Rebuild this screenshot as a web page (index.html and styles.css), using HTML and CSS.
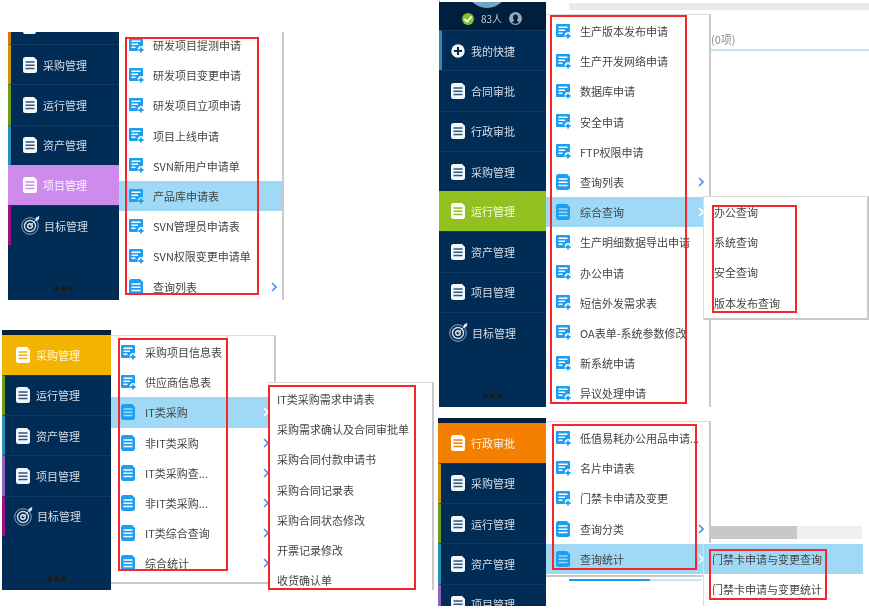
FILE: index.html
```html
<!DOCTYPE html>
<html lang="zh-CN">
<head>
<meta charset="utf-8">
<title>菜单截图</title>
<link rel="stylesheet" href="styles.css">
</head>
<body>
<svg class="defs" width="0" height="0" aria-hidden="true">
  <symbol id="i-form" viewBox="0 0 15 15">
    <path d="M1 0H13a1 1 0 0 1 1 1V8.500a3.500 3.500 0 0 0-5 4.500H1a1 1 0 0 1-1-1V1a1 1 0 0 1 1-1z" fill="#1c9ff2"/>
    <path d="M2.500 3.300h9M2.500 6.300h6.500M2.500 9.300h4" stroke="#fff" stroke-width="1.500" fill="none"/>
    <path d="M12 9.500v5M9.500 12h5" stroke="#1c9ff2" stroke-width="1.800" fill="none"/>
  </symbol>
  <symbol id="i-doc" viewBox="0 0 14 16">
    <path d="M2.500 0H11l3 3v10.500a2.500 2.500 0 0 1-2.500 2.500h-9A2.500 2.500 0 0 1 0 13.500v-11A2.500 2.500 0 0 1 2.500 0z" fill="#1c9ff2"/>
    <path d="M2.500 5h9M2.500 8.300h9M2.500 11.600h9" stroke="currentColor" stroke-width="1.500" fill="none"/>
  </symbol>
  <symbol id="i-side" viewBox="0 0 14 16">
    <path d="M2.500 0H11l3 3v10.500a2.500 2.500 0 0 1-2.500 2.500h-9A2.500 2.500 0 0 1 0 13.500v-11A2.500 2.500 0 0 1 2.500 0z" fill="#f4f6f8"/>
    <path d="M2.500 5h9M2.500 8.300h9M2.500 11.600h9" stroke="#33557f" stroke-width="1.500" fill="none"/>
  </symbol>
  <symbol id="i-side-on" viewBox="0 0 14 16">
    <path d="M2.500 0H11l3 3v10.500a2.500 2.500 0 0 1-2.500 2.500h-9A2.500 2.500 0 0 1 0 13.500v-11A2.500 2.500 0 0 1 2.500 0z" fill="#fff"/>
    <path d="M2.500 5h9M2.500 8.300h9M2.500 11.600h9" stroke="currentColor" stroke-width="1.500" fill="none"/>
  </symbol>
  <symbol id="i-target" viewBox="0 0 19 19">
    <circle cx="9" cy="10" r="8.300" fill="none" stroke="#b9c4d0" stroke-width=".8"/>
    <circle cx="9" cy="10" r="5.500" fill="none" stroke="#d5dce4" stroke-width="1.400"/>
    <circle cx="9" cy="10" r="2.300" fill="none" stroke="#e8edf2" stroke-width="1.400"/>
    <path d="M9 10l7-7M15 2l3-1.500-.8 3L15 4.500z" stroke="#e8edf2" stroke-width=".8" fill="#e8edf2"/>
  </symbol>
  <symbol id="i-plus" viewBox="0 0 15 15">
    <circle cx="7.500" cy="7.500" r="7.200" fill="#f4f6f8"/>
    <path d="M7.500 3.200v8.600M3.200 7.500h8.600" stroke="#012c56" stroke-width="2.200"/>
  </symbol>
  <symbol id="i-chev" viewBox="0 0 6 10">
    <path d="M1 1l4 4-4 4" fill="none" stroke="currentColor" stroke-width="1.600"/>
  </symbol>
</svg>

<main class="canvas">

  <!-- bottom layer: fragments of the page behind the top-right menu -->
  <div class="page-strip"></div>
  <div class="page-count">(0项)</div>
  <div class="page-rule"></div>
  <div class="page-edge"></div>

  <!-- panel A: 项目管理 -->
  <section class="panel panel-a">
    <nav class="side">
      <div class="sliver bar-orange"><span class="stub"></span></div>
      <a class="nav bar-yellow"><svg class="nav-ic"><use href="#i-side"/></svg>采购管理</a>
      <a class="nav bar-green"><svg class="nav-ic"><use href="#i-side"/></svg>运行管理</a>
      <a class="nav bar-teal"><svg class="nav-ic"><use href="#i-side"/></svg>资产管理</a>
      <a class="nav on-purple"><svg class="nav-ic"><use href="#i-side-on"/></svg>项目管理</a>
      <a class="nav bar-magenta"><svg class="nav-tg"><use href="#i-target"/></svg>目标管理</a>
      <div class="dots"><i></i><i></i><i></i></div>
    </nav>
    <div class="menu menu-a">
      <a class="row row-cut"><svg class="ic"><use href="#i-form"/></svg>研发项目提测申请</a>
      <a class="row"><svg class="ic"><use href="#i-form"/></svg>研发项目变更申请</a>
      <a class="row"><svg class="ic"><use href="#i-form"/></svg>研发项目立项申请</a>
      <a class="row"><svg class="ic"><use href="#i-form"/></svg>项目上线申请</a>
      <a class="row"><svg class="ic"><use href="#i-form"/></svg>SVN新用户申请单</a>
      <a class="row hl"><svg class="ic"><use href="#i-form"/></svg>产品库申请表</a>
      <a class="row"><svg class="ic"><use href="#i-form"/></svg>SVN管理员申请表</a>
      <a class="row"><svg class="ic"><use href="#i-form"/></svg>SVN权限变更申请单</a>
      <a class="row"><svg class="ic ic-doc"><use href="#i-doc"/></svg>查询列表<svg class="chev"><use href="#i-chev"/></svg></a>
    </div>
    <div class="redbox rb-a"></div>
  </section>

  <!-- panel C: 运行管理 -->
  <section class="panel panel-c">
    <nav class="side">
      <div class="status">
        <span class="arc"></span>
        <span class="ok"><svg viewBox="0 0 10 10"><path d="M2 5l2.200 2.200L8 3" fill="none" stroke="#fff" stroke-width="1.500"/></svg></span>
        <span class="online">83人</span>
        <svg class="user" viewBox="0 0 12 12"><circle cx="6" cy="6" r="6" fill="#9aa7b4"/><path d="M6 2.200a2.300 2.800 0 0 1 2.300 2.800c0 1.500-1 2.300-1 3l2 1.400a5 5 0 0 1-6.600 0l2-1.400c0-.7-1-1.500-1-3A2.300 2.800 0 0 1 6 2.200z" fill="#001f3f"/></svg>
      </div>
      <a class="nav bar-blue"><svg class="nav-pl"><use href="#i-plus"/></svg>我的快捷</a>
      <a class="nav"><svg class="nav-ic"><use href="#i-side"/></svg>合同审批</a>
      <a class="nav"><svg class="nav-ic"><use href="#i-side"/></svg>行政审批</a>
      <a class="nav"><svg class="nav-ic"><use href="#i-side"/></svg>采购管理</a>
      <a class="nav on-green"><svg class="nav-ic"><use href="#i-side-on"/></svg>运行管理</a>
      <a class="nav"><svg class="nav-ic"><use href="#i-side"/></svg>资产管理</a>
      <a class="nav"><svg class="nav-ic"><use href="#i-side"/></svg>项目管理</a>
      <a class="nav"><svg class="nav-tg"><use href="#i-target"/></svg>目标管理</a>
      <div class="dots"><i></i><i></i><i></i></div>
    </nav>
    <div class="menu menu-c">
      <a class="row"><svg class="ic"><use href="#i-form"/></svg>生产版本发布申请</a>
      <a class="row"><svg class="ic"><use href="#i-form"/></svg>生产开发网络申请</a>
      <a class="row"><svg class="ic"><use href="#i-form"/></svg>数据库申请</a>
      <a class="row"><svg class="ic"><use href="#i-form"/></svg>安全申请</a>
      <a class="row"><svg class="ic"><use href="#i-form"/></svg>FTP权限申请</a>
      <a class="row"><svg class="ic ic-doc"><use href="#i-doc"/></svg>查询列表<svg class="chev"><use href="#i-chev"/></svg></a>
      <a class="row hl"><svg class="ic ic-doc"><use href="#i-doc"/></svg>综合查询<svg class="chev"><use href="#i-chev"/></svg></a>
      <a class="row"><svg class="ic"><use href="#i-form"/></svg>生产明细数据导出申请</a>
      <a class="row"><svg class="ic"><use href="#i-form"/></svg>办公申请</a>
      <a class="row"><svg class="ic"><use href="#i-form"/></svg>短信外发需求表</a>
      <a class="row"><svg class="ic"><use href="#i-form"/></svg>OA表单-系统参数修改</a>
      <a class="row"><svg class="ic"><use href="#i-form"/></svg>新系统申请</a>
      <a class="row"><svg class="ic"><use href="#i-form"/></svg>异议处理申请</a>
    </div>
    <div class="sub sub-c">
      <a class="subrow">办公查询</a>
      <a class="subrow">系统查询</a>
      <a class="subrow">安全查询</a>
      <a class="subrow">版本发布查询</a>
    </div>
    <div class="redbox rb-c1"></div>
    <div class="redbox rb-c2"></div>
  </section>

  <!-- panel B: 采购管理 -->
  <section class="panel panel-b">
    <nav class="side">
      <div class="thin"></div>
      <a class="nav on-yellow"><svg class="nav-ic"><use href="#i-side-on"/></svg>采购管理</a>
      <a class="nav bar-green"><svg class="nav-ic"><use href="#i-side"/></svg>运行管理</a>
      <a class="nav bar-teal"><svg class="nav-ic"><use href="#i-side"/></svg>资产管理</a>
      <a class="nav bar-purple"><svg class="nav-ic"><use href="#i-side"/></svg>项目管理</a>
      <a class="nav bar-magenta"><svg class="nav-tg"><use href="#i-target"/></svg>目标管理</a>
      <div class="dots"><i></i><i></i><i></i></div>
    </nav>
    <div class="menu menu-b">
      <a class="row"><svg class="ic"><use href="#i-form"/></svg>采购项目信息表</a>
      <a class="row"><svg class="ic"><use href="#i-form"/></svg>供应商信息表</a>
      <a class="row hl"><svg class="ic ic-doc"><use href="#i-doc"/></svg>IT类采购<svg class="chev"><use href="#i-chev"/></svg></a>
      <a class="row"><svg class="ic ic-doc"><use href="#i-doc"/></svg>非IT类采购<svg class="chev"><use href="#i-chev"/></svg></a>
      <a class="row"><svg class="ic ic-doc"><use href="#i-doc"/></svg>IT类采购查...<svg class="chev"><use href="#i-chev"/></svg></a>
      <a class="row"><svg class="ic ic-doc"><use href="#i-doc"/></svg>非IT类采购...<svg class="chev"><use href="#i-chev"/></svg></a>
      <a class="row"><svg class="ic ic-doc"><use href="#i-doc"/></svg>IT类综合查询<svg class="chev"><use href="#i-chev"/></svg></a>
      <a class="row"><svg class="ic ic-doc"><use href="#i-doc"/></svg>综合统计<svg class="chev"><use href="#i-chev"/></svg></a>
    </div>
    <div class="sub sub-b">
      <a class="subrow">IT类采购需求申请表</a>
      <a class="subrow">采购需求确认及合同审批单</a>
      <a class="subrow">采购合同付款申请书</a>
      <a class="subrow">采购合同记录表</a>
      <a class="subrow">采购合同状态修改</a>
      <a class="subrow">开票记录修改</a>
      <a class="subrow">收货确认单</a>
    </div>
    <div class="redbox rb-b1"></div>
    <div class="redbox rb-b2"></div>
  </section>

  <!-- panel D: 行政审批 -->
  <section class="panel panel-d">
    <div class="scroll"><div class="scroll-thumb"></div></div>
    <div class="progress"><div class="progress-fill"></div></div>
    <nav class="side">
      <div class="thin"></div>
      <a class="nav on-orange"><svg class="nav-ic"><use href="#i-side-on"/></svg>行政审批</a>
      <a class="nav bar-yellow"><svg class="nav-ic"><use href="#i-side"/></svg>采购管理</a>
      <a class="nav bar-green"><svg class="nav-ic"><use href="#i-side"/></svg>运行管理</a>
      <a class="nav bar-teal"><svg class="nav-ic"><use href="#i-side"/></svg>资产管理</a>
      <a class="nav bar-purple"><svg class="nav-ic"><use href="#i-side"/></svg>项目管理</a>
    </nav>
    <div class="menu menu-d">
      <a class="row"><svg class="ic"><use href="#i-form"/></svg>低值易耗办公用品申请...</a>
      <a class="row"><svg class="ic"><use href="#i-form"/></svg>名片申请表</a>
      <a class="row"><svg class="ic"><use href="#i-form"/></svg>门禁卡申请及变更</a>
      <a class="row"><svg class="ic ic-doc"><use href="#i-doc"/></svg>查询分类<svg class="chev"><use href="#i-chev"/></svg></a>
      <a class="row hl"><svg class="ic ic-doc"><use href="#i-doc"/></svg>查询统计<svg class="chev"><use href="#i-chev"/></svg></a>
    </div>
    <div class="sub sub-d">
      <a class="subrow hl">门禁卡申请与变更查询</a>
      <a class="subrow">门禁卡申请与变更统计</a>
    </div>
    <div class="redbox rb-d1"></div>
    <div class="redbox rb-d2"></div>
  </section>

</main>
</body>
</html>
```

FILE: styles.css
```css
* { box-sizing: border-box; }

html, body {
  margin: 0;
  background: #fff;
}

.defs { position: absolute; }

.canvas {
  position: relative;
  width: 869px;
  height: 611px;
  overflow: hidden;
  background: #fff;
  font-family: "Noto Sans CJK SC", "Noto Sans", sans-serif;
  font-size: 11px;
  color: #444;
  filter: blur(0.45px);
}

/* Pasted screenshots: each one sits freely on the canvas */
.panel {
  position: absolute;
  display: flex;
  overflow: hidden;
  align-items: stretch;
}
.panel-a { left: 8px;  top: 32px;  width: 276px; height: 268px; }
.panel-b { left: 2px;  top: 330px; width: 432px; height: 260px; }
.panel-c { left: 439px; top: 2px;  width: 430px; height: 405px; }
.panel-d { left: 438px; top: 418px; width: 431px; height: 188px; }

/* Sidebar */
.side {
  display: flex;
  flex-direction: column;
  flex: none;
  width: 109px;
  background: #012c56;
}
.panel-a .side { width: 111px; }
.panel-c .side { width: 107px; }
.panel-d .side { width: 108px; }

.sliver {
  height: 12px;
  border-left: 3px solid #d9780f;
  flex: none;
  padding-left: 12px;
}
.stub {
  display: block;
  width: 13px;
  height: 2px;
  background: #f4f6f8;
  border-radius: 0 0 2px 2px;
}
.thin {
  height: 4.500px;
  flex: none;
  background: #0b1f3a;
}

.nav {
  display: flex;
  align-items: center;
  flex: none;
  height: 40.300px;
  padding-left: 11px;
  border-left: 3px solid transparent;
  border-top: 1px solid #123a60;
  color: #d5dce4;
  font-size: 11px;
}
.nav-ic { width: 14px; height: 16px; margin-right: 6px; flex: none; color: #cfcfcf; }
.nav-tg { width: 19px; height: 19px; margin: 0 4px 0 -2px; flex: none; }
.nav-pl { width: 14px; height: 14px; margin-right: 6px; flex: none; }

.panel-a .nav { padding-left: 12px; }
.panel-c .nav { padding-left: 9px; }
.panel-d .nav { padding-left: 10px; }

.bar-orange  { border-left-color: #d9780f; }
.bar-yellow  { border-left-color: #c8950c; }
.bar-green   { border-left-color: #6f9c1f; }
.bar-teal    { border-left-color: #2b8fb5; }
.bar-purple  { border-left-color: #8e62c4; }
.bar-magenta { border-left-color: #9c1280; }
.bar-blue    { border-left-color: #2b8fb5; }

.panel .on-purple { background: #cd8cec; color: #fbf4ff; border: 0; padding-left: 15px; }
.on-purple .nav-ic { color: #cd8cec; }
.panel .on-yellow { background: #f2b400; color: #fff8e0; border: 0; padding-left: 14px; }
.on-yellow .nav-ic { color: #f2b400; }
.panel .on-green { background: #92c11f; color: #f7fbe8; border: 0; padding-left: 12px; }
.on-green .nav-ic { color: #92c11f; }
.panel .on-orange { background: #f57f00; color: #fff3e0; border: 0; padding-left: 13px; }
.on-orange .nav-ic { color: #f57f00; }

.dots {
  display: flex;
  justify-content: center;
  gap: 2px;
  margin-top: auto;
  padding-bottom: 9px;
}
.dots i {
  width: 5px;
  height: 5px;
  border-radius: 50%;
  background: #1b1b1b;
}

/* Status header of the top-right sidebar */
.status {
  position: relative;
  display: flex;
  align-items: center;
  flex: none;
  height: 28px;
  padding: 5px 0 0 23px;
  background: #001f3f;
  color: #c4ccd4;
  font-size: 10px;
}
.arc {
  position: absolute;
  left: 26px;
  top: -40px;
  width: 44px;
  height: 46px;
  border-radius: 50%;
  background: #6fa6c2;
}
.ok {
  display: block;
  flex: none;
  width: 12px;
  height: 12px;
  border-radius: 50%;
  background: #84c225;
}
.ok svg { display: block; width: 12px; height: 12px; }
.online { margin-left: 7px; }
.user { width: 13px; height: 13px; margin-left: 7px; flex: none; }

/* Menus */
.menu {
  flex: none;
  width: 165px;
  background: #fff;
  border-right: 2px solid #c8c8c8;
}
.menu-a { width: 165px; height: 268px; }
.menu-b { height: 249px; margin-top: 5px; border-top: 1px solid #ddd; border-bottom: 2px solid #c8c8c8; padding-top: 1px; }
.menu-c { height: 405px; margin-top: 12px; border-top: 1px solid #ddd; padding-top: 1px; }
.menu-d { height: 156px; margin-top: 3px; border-top: 1px solid #ddd; border-bottom: 2px solid #c8c8c8; padding-top: 1px; }

.row {
  display: flex;
  align-items: center;
  height: 30.200px;
  padding: 0 5px 0 10px;
  white-space: nowrap;
}
.row-cut { margin-top: -2px; }
.ic { width: 15px; height: 15px; margin-right: 9px; flex: none; }
.ic-doc { width: 14px; height: 16px; margin-right: 10px; color: #fff; }
.hl .ic-doc { color: #9fd9f6; }
.chev {
  width: 6px;
  height: 10px;
  margin-left: auto;
  flex: none;
  color: #4d8fe8;
}
.hl { background: #9fd9f6; }
.hl .chev { color: #fff; }

/* Sub-menus open over the menu */
.sub {
  position: absolute;
  background: #fff;
  border-left: 1px solid #ddd;
  border-top: 1px solid #ddd;
  border-right: 2px solid #c8c8c8;
  padding-top: 1px;
}
.sub-b { left: 266px; top: 52px; width: 166px; height: 212px; }
.sub-c { left: 264px; top: 194px; width: 166px; height: 124px; border-bottom: 2px solid #c8c8c8; padding-top: 0; }
.sub-d { left: 265px; top: 125px; width: 160px; height: 70px; border-right: 0; border-top: 0; padding-top: 1px; }
.subrow {
  display: flex;
  align-items: center;
  height: 30.200px;
  padding-left: 8px;
  white-space: nowrap;
}
.sub-c .subrow { padding-left: 10px; }

/* Red annotation rectangles */
.redbox {
  position: absolute;
  border: 2px solid #f5262c;
}
.rb-a  { left: 117px; top: 5px;   width: 134px; height: 258px; }
.rb-b1 { left: 116px; top: 8px;   width: 110px; height: 233px; }
.rb-b2 { left: 266px; top: 55px;  width: 148px; height: 205px; }
.rb-c1 { left: 111px; top: 13px;  width: 137px; height: 389px; }
.rb-c2 { left: 273px; top: 203px; width: 85px;  height: 108px; }
.rb-d1 { left: 114px; top: 6px;   width: 145px; height: 146px; }
.rb-d2 { left: 271px; top: 131px; width: 118px; height: 51px; }

/* Fragments of the page behind */
.page-strip {
  position: absolute;
  left: 569px;
  top: 3px;
  width: 300px;
  height: 7px;
  background: #e9e9e9;
}
.page-count {
  position: absolute;
  left: 711px;
  top: 31px;
  color: #8a8a8a;
  font-size: 11px;
}
.page-rule {
  position: absolute;
  left: 711px;
  top: 49px;
  width: 158px;
  height: 2px;
  background: #bfe3f8;
}
.page-edge {
  position: absolute;
  left: 439px;
  top: 0;
  width: 1px;
  height: 407px;
  background: #bbb;
}

.scroll {
  position: absolute;
  left: 273px;
  top: 108px;
  width: 151px;
  height: 13px;
  background: #f0f0f0;
}
.scroll-thumb { width: 86px; height: 13px; background: #c8c8c8; }
.progress {
  position: absolute;
  left: 131px;
  top: 161px;
  width: 133px;
  height: 2px;
  background: #c6e6fa;
}
.progress-fill { width: 81px; height: 2px; background: #1a9bef; }
```
